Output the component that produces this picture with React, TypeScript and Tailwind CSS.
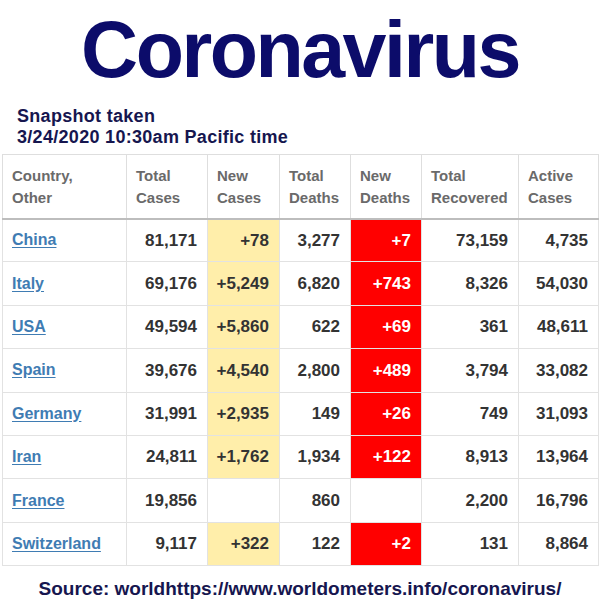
const rows: [string, string, string, string, string, string, string][] = [
  ["China", "81,171", "+78", "3,277", "+7", "73,159", "4,735"],
  ["Italy", "69,176", "+5,249", "6,820", "+743", "8,326", "54,030"],
  ["USA", "49,594", "+5,860", "622", "+69", "361", "48,611"],
  ["Spain", "39,676", "+4,540", "2,800", "+489", "3,794", "33,082"],
  ["Germany", "31,991", "+2,935", "149", "+26", "749", "31,093"],
  ["Iran", "24,811", "+1,762", "1,934", "+122", "8,913", "13,964"],
  ["France", "19,856", "", "860", "", "2,200", "16,796"],
  ["Switzerland", "9,117", "+322", "122", "+2", "131", "8,864"],
];

const headers = [
  ["Country,", "Other"],
  ["Total", "Cases"],
  ["New", "Cases"],
  ["Total", "Deaths"],
  ["New", "Deaths"],
  ["Total", "Recovered"],
  ["Active", "Cases"],
];

const widths = ["w-[124px]", "w-[81px]", "w-[72px]", "w-[71px]", "w-[71px]", "w-[97px]", "w-[80px]"];

export default function App() {
  return (
    <div className="w-[600px] h-[600px] bg-white overflow-hidden font-['Liberation_Sans',Arial,sans-serif]">
      <h1 className="pt-[10px] h-[90px] text-center text-[79px] leading-[80px] font-bold tracking-[-2.5px] text-[#0c0c6a]">
        Coronavirus
      </h1>
      <div className="mt-[16px] pl-[17px] text-[18px] leading-[21px] font-bold tracking-[0.3px] text-[#16164f]">
        <div>Snapshot taken</div>
        <div>3/24/2020 10:30am Pacific time</div>
      </div>
      <table className="mt-[6px] ml-[2px] w-[596px] table-fixed border-collapse">
        <colgroup>
          {widths.map((w, i) => (
            <col key={i} className={w} />
          ))}
        </colgroup>
        <thead>
          <tr>
            {headers.map((h, i) => (
              <th
                key={i}
                className="h-[64px] align-top pt-[10px] pl-[9px] text-left text-[15px] leading-[22px] font-bold text-[#6a6a6a] border border-[#dedede] border-b-2 border-b-[#bdbdbd]"
              >
                {h[0]}
                <br />
                {h[1]}
              </th>
            ))}
          </tr>
        </thead>
        <tbody>
          {rows.map((r) => (
            <tr key={r[0]}>
              {r.map((v, i) => {
                if (i === 0)
                  return (
                    <td key={i} className="h-[43.4px] pl-[9px] border border-[#e2e2e2] text-[16px] font-bold">
                      <span className="text-[#3f7cb3] underline underline-offset-2">{v}</span>
                    </td>
                  );
                const bg =
                  i === 2 ? (v ? "bg-[#ffeeaa] text-[#333]" : "text-[#333]") : i === 4 ? (v ? "bg-[#ff0000] text-white" : "text-[#333]") : "text-[#333]";
                return (
                  <td key={i} className={`h-[43.4px] pr-[10px] text-right text-[17px] font-bold border border-[#e2e2e2] ${bg}`}>
                    {v}
                  </td>
                );
              })}
            </tr>
          ))}
        </tbody>
      </table>
      <div className="mt-[9px] text-center text-[19px] font-bold text-[#16164f]">
        Source: worldhttps://www.worldometers.info/coronavirus/
      </div>
    </div>
  );
}
